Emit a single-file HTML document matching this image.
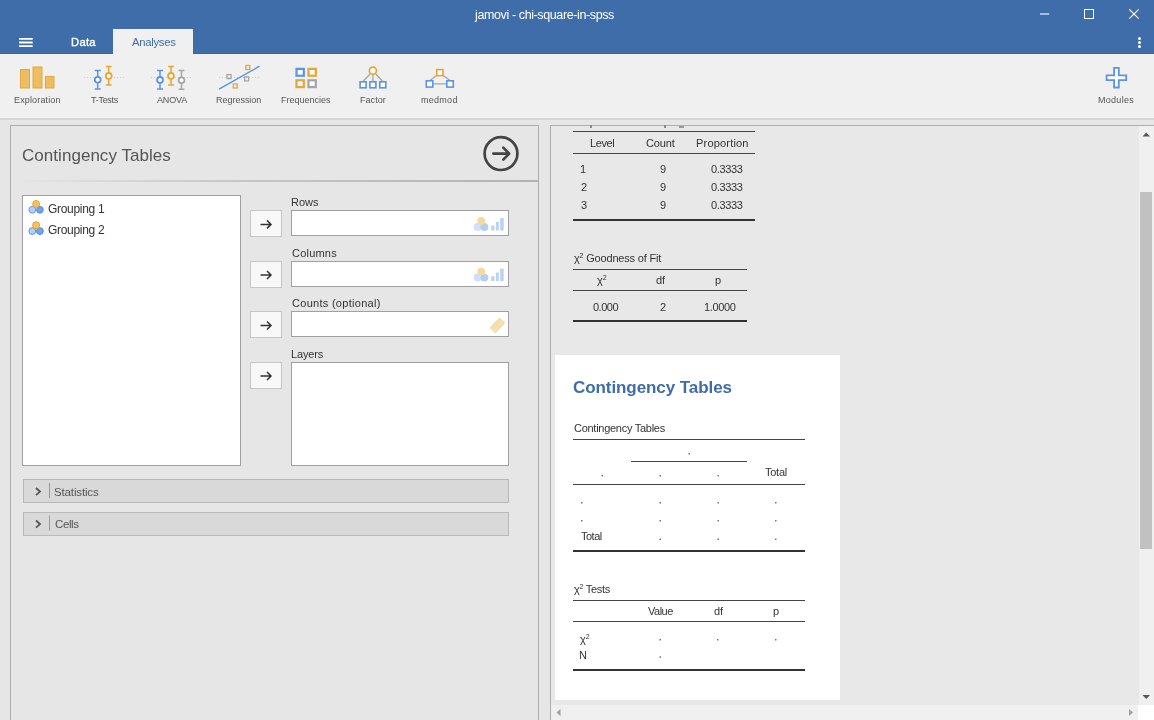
<!DOCTYPE html>
<html><head><meta charset="utf-8">
<style>
*{margin:0;padding:0;box-sizing:border-box}
html,body{width:1154px;height:720px;overflow:hidden;background:#e6e6e6;font-family:"Liberation Sans", sans-serif}
.a{position:absolute}
.t{position:absolute;line-height:1;white-space:nowrap;will-change:transform}
.sp{font-size:7px;position:relative;top:-4px}
</style></head><body>
<!-- header -->
<div class="a" style="left:0;top:0;width:1154px;height:54px;background:#3e6da9"></div>
<div class="a" style="left:0;top:53px;width:1154px;height:1px;background:#3767a6"></div>
<svg class="a" style="left:1030px;top:0" width="20" height="20"><path d="M10 14H19.2" stroke="#fff" stroke-width="1.1"/></svg>
<div class="a" style="left:1084px;top:9px;width:10px;height:10px;border:1px solid #fff"></div>
<svg class="a" style="left:1128px;top:8px" width="12" height="12" viewBox="0 0 12 12"><path d="M1.3 1.3L10.7 10.7M10.7 1.3L1.3 10.7" stroke="#fff" stroke-width="1.2"/></svg>
<svg class="a" style="left:0;top:30px" width="40" height="24" viewBox="0 30 40 24"><path d="M19 38.8H32.7M19 42.5H32.7M19 46.2H32.7" stroke="#fff" stroke-width="1.8"/></svg>
<div class="a" style="left:113px;top:29px;width:80px;height:26px;background:#f0f0f0"></div>
<div class="a" style="left:1138px;top:37px;width:3px;height:3px;border-radius:50%;background:#fff"></div>
<div class="a" style="left:1138px;top:41px;width:3px;height:3px;border-radius:50%;background:#fff"></div>
<div class="a" style="left:1138px;top:45px;width:3px;height:3px;border-radius:50%;background:#fff"></div>
<!-- toolbar -->
<div class="a" style="left:0;top:54px;width:1154px;height:64px;background:#f0f0f0"></div>
<div class="a" style="left:113px;top:29px;width:80px;height:26px;background:#f0f0f0"></div>
<div class="a" style="left:0;top:118px;width:1154px;height:2px;background:#d6d6d6"></div>
<svg class="a" style="left:0;top:54px" width="1154" height="64" viewBox="0 54 1154 64">
 <g fill="#ecbd63" stroke="#e6a935" stroke-width="1">
  <rect x="20.5" y="69.5" width="9" height="18.5"/>
  <rect x="33" y="67" width="9" height="21"/>
  <rect x="45.5" y="76.5" width="8.5" height="11.5"/>
 </g>
 <g stroke="#c3ccd8" stroke-width="1" stroke-dasharray="1 2">
  <path d="M84 77.5H125"/><path d="M151 77.5H192"/><path d="M219 77.5H260"/>
 </g>
 <g stroke-width="1.5" fill="#fff">
  <path d="M97.7 70.5V89M94.8 70.5H100.7M94.8 89H100.7" stroke="#5b93e6"/><circle cx="97.7" cy="79.8" r="2.9" stroke="#5b93e6" stroke-width="1.8"/>
  <path d="M108.7 66.6V85M105.8 66.6H111.6M105.8 85H111.6" stroke="#e5a633"/><circle cx="108.7" cy="75.9" r="2.9" stroke="#e5a633" stroke-width="1.8"/>
  <path d="M160 70.5V89M157.1 70.5H163M157.1 89H163" stroke="#5b93e6"/><circle cx="160" cy="79.9" r="2.9" stroke="#5b93e6" stroke-width="1.8"/>
  <path d="M171 66.5V85M168.1 66.5H174M168.1 85H174" stroke="#e5a633"/><circle cx="171" cy="75.9" r="2.9" stroke="#e5a633" stroke-width="1.8"/>
  <path d="M181.5 70.5V89.3M178.6 70.5H184.4M178.6 89.3H184.4" stroke="#a5a5a5"/><circle cx="181.5" cy="80.2" r="2.9" stroke="#a5a5a5" stroke-width="1.8"/>
 </g>
 <path d="M219 89.2L259.5 66.2" stroke="#5b93e6" stroke-width="1.4"/>
 <g fill="none" stroke-width="1.3">
  <rect x="227" y="74.6" width="4" height="4" stroke="#a5a5a5"/>
  <rect x="245.8" y="65.5" width="4" height="4" stroke="#e5a633"/>
  <rect x="244.6" y="76.9" width="4" height="4" stroke="#a5a5a5"/>
  <rect x="233.3" y="84" width="4" height="4" stroke="#e5a633"/>
 </g>
 <g fill="#fff" stroke-width="2.2">
  <rect x="296.5" y="68.9" width="7.3" height="6.8" stroke="#5b93e6"/>
  <rect x="308.5" y="68.9" width="7.3" height="6.8" stroke="#e5a633"/>
  <rect x="296.5" y="80.3" width="7.3" height="6.8" stroke="#e5a633"/>
  <rect x="308.5" y="80.3" width="7.3" height="6.8" stroke="#a5a5a5"/>
 </g>
 <g stroke="#a5a5a5" stroke-width="1.3">
  <path d="M370 74L363 81.5M372.9 75V81.5M375.8 74L382.8 81.5"/>
  <path d="M436.5 75.5L430 80.5M443.3 75.5L450 80.5M433.6 83.8H446"/>
 </g>
 <circle cx="372.9" cy="70.7" r="3.5" fill="#fff" stroke="#e5a633" stroke-width="1.7"/>
 <g fill="#fff" stroke="#5b93e6" stroke-width="1.6">
  <rect x="360.1" y="81.8" width="6" height="6"/>
  <rect x="369.9" y="81.8" width="6" height="6"/>
  <rect x="379.8" y="81.8" width="6" height="6"/>
  <rect x="426.3" y="80.8" width="6.5" height="6.3"/>
  <rect x="446.8" y="80.8" width="6.5" height="6.3"/>
 </g>
 <rect x="436.8" y="69.6" width="6.2" height="6" fill="#fff" stroke="#e5a633" stroke-width="1.6"/>
 <path d="M1114.1 67.9H1118.8V75.4H1126.2V80.1H1118.8V87.5H1114.1V80.1H1106.6V75.4H1114.1Z" fill="#fff" stroke="#5b93e6" stroke-width="1.8"/>
</svg>

<!-- left panel -->
<div class="a" style="left:10px;top:125px;width:529px;height:600px;border:1px solid #adadad;background:#e6e6e6"></div>
<div class="a" style="left:11px;top:180px;width:527px;height:2px;background:linear-gradient(to right,rgba(180,180,180,0) 0%,rgba(180,180,180,0.6) 40%,#b2b2b2 100%)"></div>
<svg class="a" style="left:480px;top:132px" width="42" height="42" viewBox="0 0 42 42">
 <circle cx="21" cy="21.6" r="16.4" fill="none" stroke="#444" stroke-width="2.7"/>
 <path d="M13.3 21.6H29M23.3 15.6L29.2 21.6L23.3 27.6" fill="none" stroke="#444" stroke-width="2.6" stroke-linecap="round" stroke-linejoin="round"/>
</svg>
<!-- variable list -->
<div class="a" style="left:22px;top:195px;width:219px;height:271px;border:1px solid #a0a0a0;background:#fff"></div>
<svg class="a" style="left:26px;top:198px" width="20" height="40" viewBox="0 0 20 40">
 <g stroke-width="0.9"><circle cx="6.3" cy="11.8" r="3.4" fill="#b3cff7" stroke="#5b93e6"/><circle cx="13.9" cy="11.8" r="3.4" fill="#72a3ee" stroke="#4f8ae2"/><circle cx="10.1" cy="5.9" r="3.5" fill="#f1c262" stroke="#e3a433"/></g>
 <g transform="translate(0,21.3)">stroke-width="0.9"><circle cx="6.3" cy="11.8" r="3.4" fill="#b3cff7" stroke="#5b93e6"/><circle cx="13.9" cy="11.8" r="3.4" fill="#72a3ee" stroke="#4f8ae2"/><circle cx="10.1" cy="5.9" r="3.5" fill="#f1c262" stroke="#e3a433"/></g>
</svg>
<!-- arrow buttons -->
<div class="a" style="left:250px;top:210px;width:32px;height:27px;border:1px solid #c6c6c6;background:#f8f8f8"></div>
<div class="a" style="left:250px;top:261px;width:32px;height:27px;border:1px solid #c6c6c6;background:#f8f8f8"></div>
<div class="a" style="left:250px;top:311px;width:32px;height:27px;border:1px solid #c6c6c6;background:#f8f8f8"></div>
<div class="a" style="left:250px;top:362px;width:32px;height:27px;border:1px solid #c6c6c6;background:#f8f8f8"></div>
<svg class="a" style="left:250px;top:210px" width="32" height="180" viewBox="0 0 32 180">
 <g fill="none" stroke="#333" stroke-width="1.5">
  <path d="M10.5 14.4H21M17 10.4L21 14.4L17 18.4"/>
  <path d="M10.5 65H21M17 61L21 65L17 69"/>
  <path d="M10.5 115.5H21M17 111.5L21 115.5L17 119.5"/>
  <path d="M10.5 166H21M17 162L21 166L17 170"/>
 </g>
</svg>
<!-- target boxes -->
<div class="a" style="left:291px;top:210px;width:218px;height:26px;border:1px solid #a0a0a0;background:#fff"></div>
<div class="a" style="left:291px;top:261px;width:218px;height:26px;border:1px solid #a0a0a0;background:#fff"></div>
<div class="a" style="left:291px;top:311px;width:218px;height:26px;border:1px solid #a0a0a0;background:#fff"></div>
<div class="a" style="left:291px;top:362px;width:218px;height:104px;border:1px solid #a0a0a0;background:#fff"></div>
<svg class="a" style="left:470px;top:214px" width="38" height="120" viewBox="0 0 38 120">
 <g>
  <circle cx="7.5" cy="12.9" r="3.9" fill="#cfe0fa"/><circle cx="14.4" cy="13" r="3.9" fill="#b3cdf5"/><circle cx="11.2" cy="7" r="3.9" fill="#f5d89b"/>
  <rect x="21.3" y="11.6" width="3.1" height="4.9" fill="#b9d1f5"/><rect x="25.9" y="7.9" width="2.9" height="8.6" fill="#b9d1f5"/><rect x="30.2" y="4.1" width="3.5" height="12.4" fill="#b9d1f5"/>
 </g>
 <g transform="translate(0,50.6)">
  <circle cx="7.5" cy="12.9" r="3.9" fill="#cfe0fa"/><circle cx="14.4" cy="13" r="3.9" fill="#b3cdf5"/><circle cx="11.2" cy="7" r="3.9" fill="#f5d89b"/>
  <rect x="21.3" y="11.6" width="3.1" height="4.9" fill="#b9d1f5"/><rect x="25.9" y="7.9" width="2.9" height="8.6" fill="#b9d1f5"/><rect x="30.2" y="4.1" width="3.5" height="12.4" fill="#b9d1f5"/>
 </g>
 <path d="M20.2 113.9L25.4 118.9L34.6 108.9L29.4 104.1Z" fill="#f6e0b0" stroke="#f0d393" stroke-width="0.9"/><path d="M23.5 111.5L25 113M25.5 109.3L27 110.8M27.5 107.1L29 108.6M29.5 104.9L31 106.4" stroke="#e9c98a" stroke-width="0.6"/>
</svg>
<!-- collapsible bars -->
<div class="a" style="left:23px;top:479px;width:486px;height:24px;border:1px solid #b9b9b9;background:#d9d9d9"></div>
<div class="a" style="left:23px;top:512px;width:486px;height:24px;border:1px solid #b9b9b9;background:#d9d9d9"></div>
<svg class="a" style="left:30px;top:480px" width="24" height="56" viewBox="0 0 24 56">
 <g fill="none" stroke="#555" stroke-width="1.8"><path d="M6 8L10 11.6L6 15.2"/><path d="M6 40.5L10 44.1L6 47.7"/></g>
 <g fill="#999"><rect x="19" y="3" width="1" height="15"/><rect x="19" y="35.5" width="1" height="15"/></g>
</svg>

<!-- results panel -->
<div class="a" style="left:550px;top:125px;width:604px;height:600px;border-left:1px solid #adadad;border-top:1px solid #adadad;background:#e8e8e8"></div>
<div class="a" style="left:1139px;top:126px;width:15px;height:580px;background:#f0f0f0"></div>
<div class="a" style="left:1140px;top:192px;width:12px;height:357px;background:#c1c1c1"></div>
<svg class="a" style="left:1139px;top:126px" width="15" height="580" viewBox="0 0 15 580"><path d="M3.5 10.5H11L7.25 6.5Z M3.5 569H11L7.25 573Z" fill="#555"/></svg>
<div class="a" style="left:551px;top:705px;width:588px;height:15px;background:#f0f0f0"></div>
<div class="a" style="left:1138px;top:705px;width:16px;height:15px;background:#fff"></div>
<svg class="a" style="left:551px;top:705px" width="588" height="15" viewBox="0 0 588 15"><path d="M9.5 4V11L5.5 7.5Z M578 4V11L582 7.5Z" fill="#a0a0a0"/></svg>
<!-- results lines -->
<div class="a" style="left:590px;top:125px;width:1.5px;height:2.5px;background:#8a8a8a"></div>
<div class="a" style="left:664px;top:125px;width:1.5px;height:2.5px;background:#8a8a8a"></div>
<div class="a" style="left:679px;top:126px;width:5px;height:1.5px;background:#999"></div>
<div class="a" style="left:573px;top:131px;width:182px;height:1px;background:#444"></div>
<div class="a" style="left:573px;top:153px;width:182px;height:1px;background:#444"></div>
<div class="a" style="left:573px;top:219px;width:182px;height:2px;background:#333"></div>
<div class="a" style="left:573px;top:269px;width:174px;height:1px;background:#444"></div>
<div class="a" style="left:573px;top:290px;width:174px;height:1px;background:#444"></div>
<div class="a" style="left:573px;top:320px;width:174px;height:2px;background:#333"></div>
<!-- white results box -->
<div class="a" style="left:555px;top:355px;width:285px;height:345px;background:#fff"></div>
<div class="a" style="left:573px;top:439px;width:232px;height:1px;background:#444"></div>
<div class="a" style="left:631px;top:461px;width:116px;height:1px;background:#444"></div>
<div class="a" style="left:573px;top:484px;width:232px;height:1px;background:#444"></div>
<div class="a" style="left:573px;top:550px;width:232px;height:2px;background:#333"></div>
<div class="a" style="left:573px;top:600px;width:232px;height:1px;background:#444"></div>
<div class="a" style="left:573px;top:621px;width:232px;height:1px;background:#444"></div>
<div class="a" style="left:573px;top:669px;width:232px;height:2px;background:#333"></div>
<!-- dots -->
<svg class="a" style="left:555px;top:440px" width="285" height="230" viewBox="555 440 285 230">
 <g fill="#777">
  <rect x="688.5" y="453" width="1.5" height="1.5"/>
  <rect x="601.5" y="475" width="1.5" height="1.5"/><rect x="659.5" y="475" width="1.5" height="1.5"/><rect x="717.5" y="475" width="1.5" height="1.5"/>
  <rect x="581" y="502" width="1.5" height="1.5"/><rect x="659.5" y="502" width="1.5" height="1.5"/><rect x="717.5" y="502" width="1.5" height="1.5"/><rect x="775" y="502" width="1.5" height="1.5"/>
  <rect x="581" y="520" width="1.5" height="1.5"/><rect x="659.5" y="520" width="1.5" height="1.5"/><rect x="717.5" y="520" width="1.5" height="1.5"/><rect x="775" y="520" width="1.5" height="1.5"/>
  <rect x="659.5" y="538.5" width="1.5" height="1.5"/><rect x="717.5" y="538.5" width="1.5" height="1.5"/><rect x="775" y="538.5" width="1.5" height="1.5"/>
  <rect x="659.5" y="639" width="1.5" height="1.5"/><rect x="717" y="639" width="1.5" height="1.5"/><rect x="775" y="639" width="1.5" height="1.5"/>
  <rect x="659.5" y="656.3" width="1.5" height="1.5"/>
 </g>
</svg>

<div class="t" style="left:475.00px;top:9.20px;font-size:12.5px;color:#fff;font-weight:400;letter-spacing:-0.385px;">jamovi - chi-square-in-spss</div>
<div class="t" style="left:70.50px;top:37.00px;font-size:11.3px;color:#fff;font-weight:400;letter-spacing:0.233px;-webkit-text-stroke:0.35px #fff;">Data</div>
<div class="t" style="left:131.70px;top:37.00px;font-size:11.3px;color:#3e6da9;font-weight:400;letter-spacing:-0.286px;">Analyses</div>
<div class="t" style="left:14.20px;top:96.30px;font-size:9px;color:#555;font-weight:400;letter-spacing:0.150px;">Exploration</div>
<div class="t" style="left:91.00px;top:96.30px;font-size:9px;color:#555;font-weight:400;letter-spacing:-0.283px;">T-Tests</div>
<div class="t" style="left:156.70px;top:96.30px;font-size:9px;color:#555;font-weight:400;letter-spacing:-0.175px;">ANOVA</div>
<div class="t" style="left:216.00px;top:96.30px;font-size:9px;color:#555;font-weight:400;letter-spacing:-0.022px;">Regression</div>
<div class="t" style="left:280.70px;top:96.30px;font-size:9px;color:#555;font-weight:400;letter-spacing:0.000px;">Frequencies</div>
<div class="t" style="left:359.60px;top:96.30px;font-size:9px;color:#555;font-weight:400;letter-spacing:0.060px;">Factor</div>
<div class="t" style="left:421.20px;top:96.30px;font-size:9px;color:#555;font-weight:400;letter-spacing:0.280px;">medmod</div>
<div class="t" style="left:1097.70px;top:96.30px;font-size:9px;color:#555;font-weight:400;letter-spacing:0.283px;">Modules</div>
<div class="t" style="left:21.60px;top:146.70px;font-size:17px;color:#555;font-weight:400;letter-spacing:0.041px;">Contingency Tables</div>
<div class="t" style="left:48.30px;top:202.60px;font-size:12px;color:#333;font-weight:400;letter-spacing:-0.300px;">Grouping 1</div>
<div class="t" style="left:48.30px;top:223.90px;font-size:12px;color:#333;font-weight:400;letter-spacing:-0.300px;">Grouping 2</div>
<div class="t" style="left:290.60px;top:196.90px;font-size:11px;color:#333;font-weight:400;letter-spacing:0.000px;">Rows</div>
<div class="t" style="left:291.60px;top:247.70px;font-size:11px;color:#333;font-weight:400;letter-spacing:0.217px;">Columns</div>
<div class="t" style="left:291.60px;top:298.20px;font-size:11px;color:#333;font-weight:400;letter-spacing:0.287px;">Counts (optional)</div>
<div class="t" style="left:290.60px;top:349.00px;font-size:11px;color:#333;font-weight:400;letter-spacing:-0.140px;">Layers</div>
<div class="t" style="left:53.60px;top:486.50px;font-size:11.5px;color:#555;font-weight:400;letter-spacing:-0.144px;">Statistics</div>
<div class="t" style="left:54.60px;top:518.80px;font-size:11.5px;color:#555;font-weight:400;letter-spacing:-0.400px;">Cells</div>
<div class="t" style="left:589.70px;top:137.60px;font-size:11px;color:#333;font-weight:400;letter-spacing:-0.425px;">Level</div>
<div class="t" style="left:646.00px;top:137.60px;font-size:11px;color:#333;font-weight:400;letter-spacing:-0.150px;">Count</div>
<div class="t" style="left:696.00px;top:137.60px;font-size:11px;color:#333;font-weight:400;letter-spacing:0.189px;">Proportion</div>
<div class="t" style="left:580.00px;top:163.50px;font-size:11px;color:#333;font-weight:400;letter-spacing:0.000px;">1</div>
<div class="t" style="left:580.50px;top:181.50px;font-size:11px;color:#333;font-weight:400;letter-spacing:0.000px;">2</div>
<div class="t" style="left:580.50px;top:200.20px;font-size:11px;color:#333;font-weight:400;letter-spacing:0.000px;">3</div>
<div class="t" style="left:659.50px;top:163.50px;font-size:11px;color:#333;font-weight:400;letter-spacing:0.000px;">9</div>
<div class="t" style="left:710.80px;top:163.50px;font-size:11px;color:#333;font-weight:400;letter-spacing:-0.360px;">0.3333</div>
<div class="t" style="left:659.50px;top:181.50px;font-size:11px;color:#333;font-weight:400;letter-spacing:0.000px;">9</div>
<div class="t" style="left:710.80px;top:181.50px;font-size:11px;color:#333;font-weight:400;letter-spacing:-0.360px;">0.3333</div>
<div class="t" style="left:659.50px;top:200.20px;font-size:11px;color:#333;font-weight:400;letter-spacing:0.000px;">9</div>
<div class="t" style="left:710.80px;top:200.20px;font-size:11px;color:#333;font-weight:400;letter-spacing:-0.360px;">0.3333</div>
<div class="t" style="left:573.50px;top:253.20px;font-size:11px;color:#333;font-weight:400;letter-spacing:-0.176px;">χ<span class="sp">2</span> Goodness of Fit</div>
<div class="t" style="left:597.00px;top:275.20px;font-size:11px;color:#333;font-weight:400;letter-spacing:0.000px;">χ<span class="sp">2</span></div>
<div class="t" style="left:655.50px;top:275.20px;font-size:11px;color:#333;font-weight:400;letter-spacing:0.000px;">df</div>
<div class="t" style="left:714.50px;top:275.20px;font-size:11px;color:#333;font-weight:400;letter-spacing:0.000px;">p</div>
<div class="t" style="left:593.00px;top:301.50px;font-size:11px;color:#333;font-weight:400;letter-spacing:-0.500px;">0.000</div>
<div class="t" style="left:660.00px;top:301.50px;font-size:11px;color:#333;font-weight:400;letter-spacing:0.000px;">2</div>
<div class="t" style="left:703.70px;top:301.50px;font-size:11px;color:#333;font-weight:400;letter-spacing:-0.340px;">1.0000</div>
<div class="t" style="left:572.60px;top:379.20px;font-size:17px;color:#3e6da9;font-weight:700;letter-spacing:-0.076px;">Contingency Tables</div>
<div class="t" style="left:573.60px;top:423.20px;font-size:11px;color:#333;font-weight:400;letter-spacing:-0.271px;">Contingency Tables</div>
<div class="t" style="left:765.00px;top:467.20px;font-size:11px;color:#333;font-weight:400;letter-spacing:-0.250px;">Total</div>
<div class="t" style="left:580.80px;top:530.70px;font-size:11px;color:#333;font-weight:400;letter-spacing:-0.500px;">Total</div>
<div class="t" style="left:573.50px;top:584.40px;font-size:11px;color:#333;font-weight:400;letter-spacing:-0.300px;">χ<span class="sp">2</span> Tests</div>
<div class="t" style="left:647.60px;top:605.70px;font-size:11px;color:#333;font-weight:400;letter-spacing:-0.500px;">Value</div>
<div class="t" style="left:713.50px;top:605.70px;font-size:11px;color:#333;font-weight:400;letter-spacing:0.000px;">df</div>
<div class="t" style="left:772.50px;top:605.70px;font-size:11px;color:#333;font-weight:400;letter-spacing:0.000px;">p</div>
<div class="t" style="left:580.30px;top:634.30px;font-size:11px;color:#333;font-weight:400;letter-spacing:0.000px;">χ<span class="sp">2</span></div>
<div class="t" style="left:579.30px;top:650.20px;font-size:11px;color:#333;font-weight:400;letter-spacing:0.000px;">N</div>
</body></html>
